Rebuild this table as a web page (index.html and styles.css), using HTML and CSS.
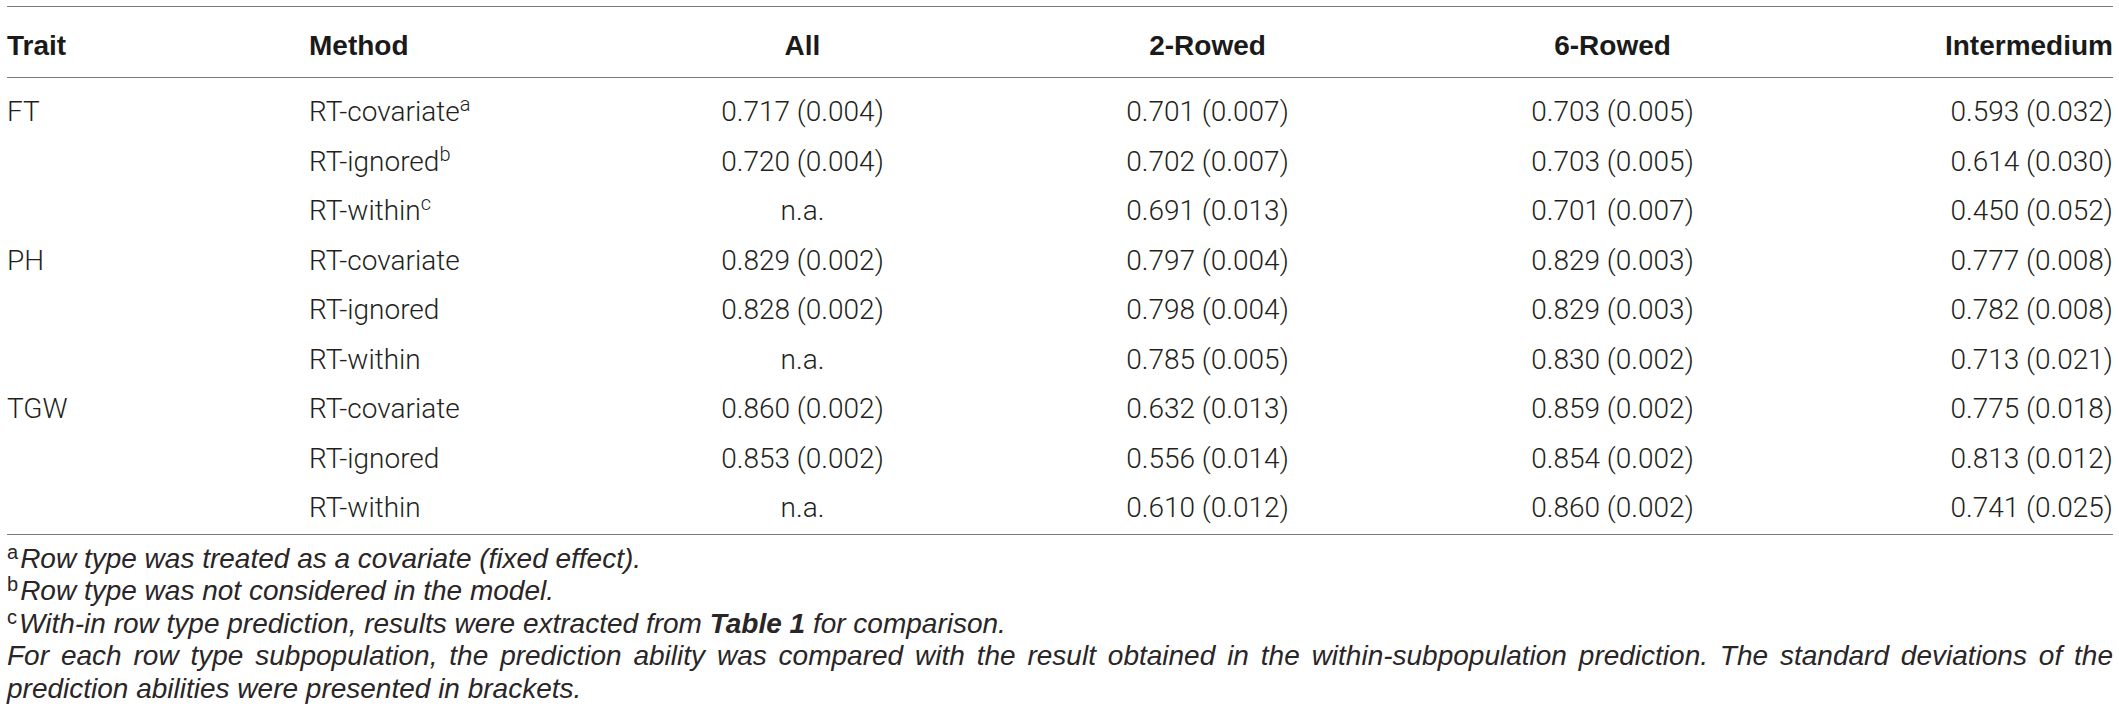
FILE: index.html
```html
<!DOCTYPE html>
<html lang="en">
<head>
<meta charset="utf-8">
<title>Table</title>
<link rel="stylesheet" href="styles.css">
</head>
<body>
<div class="wrap">
  <table class="data">
    <colgroup>
      <col class="c-trait">
      <col class="c-method">
      <col class="c-num">
      <col class="c-num">
      <col class="c-num">
      <col class="c-last">
    </colgroup>
    <thead>
      <tr>
        <th class="l">Trait</th>
        <th class="l">Method</th>
        <th>All</th>
        <th>2-Rowed</th>
        <th>6-Rowed</th>
        <th class="r">Intermedium</th>
      </tr>
    </thead>
    <tbody>
      <tr class="first">
        <td class="l">FT</td>
        <td class="l">RT-covariate<sup>a</sup></td>
        <td>0.717 (0.004)</td>
        <td>0.701 (0.007)</td>
        <td>0.703 (0.005)</td>
        <td class="r">0.593 (0.032)</td>
      </tr>
      <tr>
        <td class="l"></td>
        <td class="l">RT-ignored<sup>b</sup></td>
        <td>0.720 (0.004)</td>
        <td>0.702 (0.007)</td>
        <td>0.703 (0.005)</td>
        <td class="r">0.614 (0.030)</td>
      </tr>
      <tr>
        <td class="l"></td>
        <td class="l">RT-within<sup>c</sup></td>
        <td>n.a.</td>
        <td>0.691 (0.013)</td>
        <td>0.701 (0.007)</td>
        <td class="r">0.450 (0.052)</td>
      </tr>
      <tr>
        <td class="l">PH</td>
        <td class="l">RT-covariate</td>
        <td>0.829 (0.002)</td>
        <td>0.797 (0.004)</td>
        <td>0.829 (0.003)</td>
        <td class="r">0.777 (0.008)</td>
      </tr>
      <tr>
        <td class="l"></td>
        <td class="l">RT-ignored</td>
        <td>0.828 (0.002)</td>
        <td>0.798 (0.004)</td>
        <td>0.829 (0.003)</td>
        <td class="r">0.782 (0.008)</td>
      </tr>
      <tr>
        <td class="l"></td>
        <td class="l">RT-within</td>
        <td>n.a.</td>
        <td>0.785 (0.005)</td>
        <td>0.830 (0.002)</td>
        <td class="r">0.713 (0.021)</td>
      </tr>
      <tr>
        <td class="l">TGW</td>
        <td class="l">RT-covariate</td>
        <td>0.860 (0.002)</td>
        <td>0.632 (0.013)</td>
        <td>0.859 (0.002)</td>
        <td class="r">0.775 (0.018)</td>
      </tr>
      <tr>
        <td class="l"></td>
        <td class="l">RT-ignored</td>
        <td>0.853 (0.002)</td>
        <td>0.556 (0.014)</td>
        <td>0.854 (0.002)</td>
        <td class="r">0.813 (0.012)</td>
      </tr>
      <tr class="last">
        <td class="l"></td>
        <td class="l">RT-within</td>
        <td>n.a.</td>
        <td>0.610 (0.012)</td>
        <td>0.860 (0.002)</td>
        <td class="r">0.741 (0.025)</td>
      </tr>
    </tbody>
  </table>
  <div class="notes">
    <p class="note"><span class="mark">a</span>Row type was treated as a covariate (fixed effect).</p>
    <p class="note"><span class="mark">b</span>Row type was not considered in the model.</p>
    <p class="note"><span class="mark">c</span>With-in row type prediction, results were extracted from <b>Table 1</b> for comparison.</p>
    <p class="note">For each row type subpopulation, the prediction ability was compared with the result obtained in the within-subpopulation prediction. The standard deviations of the prediction abilities were presented in brackets.</p>
  </div>
</div>
</body>
</html>
```

FILE: styles.css
```css
html, body {
  margin: 0;
  padding: 0;
  background: #ffffff;
}

body {
  font-family: Roboto, "Liberation Sans", Arial, sans-serif;
  font-weight: 300;
  color: #231f20;
}

.wrap {
  padding: 6px 6px 0 7px;
}

.data {
  width: 2106px;
  border-collapse: collapse;
  table-layout: fixed;
}

.c-trait { width: 302px; }
.c-method { width: 291px; }
.c-num { width: 405px; }
.c-last { width: 298px; }

.data thead tr {
  border-top: 1px solid #7a7a7a;
  border-bottom: 1px solid #7a7a7a;
}

.data th {
  height: 63px;
  padding: 7px 0 0 0;
  font-family: "Liberation Sans", Arial, sans-serif;
  font-size: 28px;
  font-weight: bold;
  text-align: center;
  vertical-align: middle;
  color: #1a1a1a;
}

.data td {
  height: 49.5px;
  padding: 0;
  font-size: 28px;
  text-align: center;
  vertical-align: middle;
  white-space: nowrap;
}

.data .l { text-align: left; }
.data .r { text-align: right; }

.data tr.first td {
  padding-top: 9px;
}

.data tr.last td {
  padding-bottom: 1px;
}

.data tbody tr.last {
  border-bottom: 1px solid #7a7a7a;
}

.data sup {
  font-size: 20px;
  line-height: 0;
  vertical-align: 0.5em;
}

.notes {
  margin-top: 8px;
  width: 2106px;
}

.note {
  margin: 0;
  font-family: "Liberation Sans", Arial, sans-serif;
  font-weight: normal;
  font-size: 28px;
  line-height: 32.5px;
  font-style: italic;
  text-align: justify;
  color: #2a2627;
}

.note b {
  font-weight: bold;
}

.mark {
  font-style: normal;
  font-size: 20px;
  line-height: 0;
  vertical-align: 0.45em;
  margin-right: 2px;
}
```
